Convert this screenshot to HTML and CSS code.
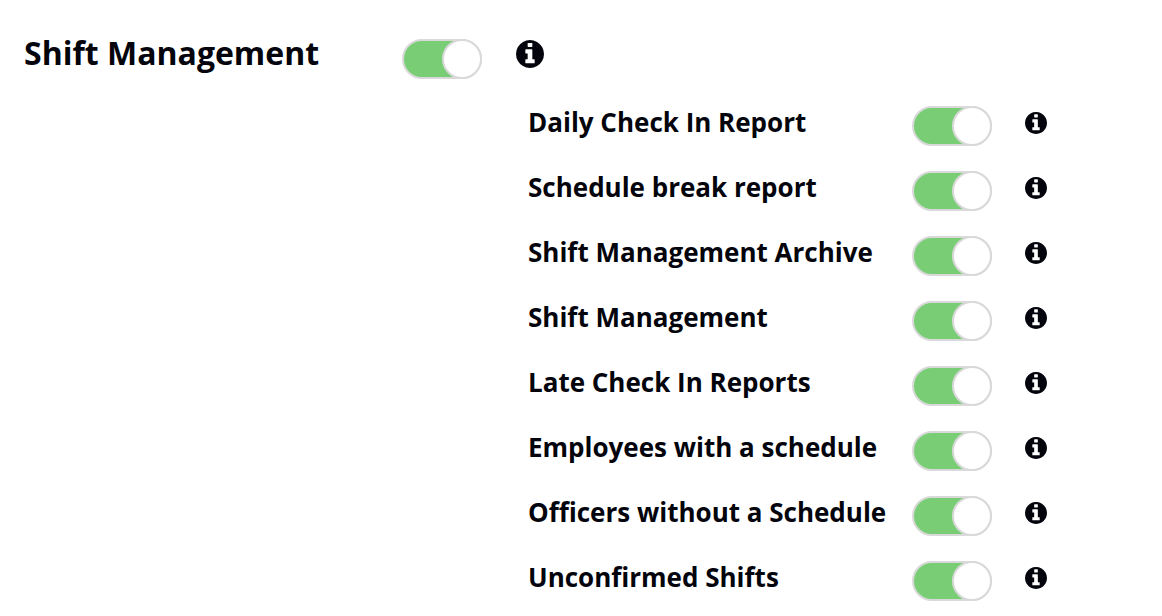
FILE: index.html
```html
<!DOCTYPE html>
<html lang="en">
<head>
    <meta charset="UTF-8">
    <meta name="viewport" content="width=device-width, initial-scale=1.0">
    <title>Shift Management</title>
    <link rel="stylesheet" href="styles.css">
</head>
<body>
    <!-- info icon shared by every row -->
    <svg class="sprite" aria-hidden="true">
        <symbol id="info" viewBox="0 0 1536 1536">
            <path d="M1024 1248v-160q0-14-9-23t-23-9h-96v-512q0-14-9-23t-23-9h-320q-14 0-23 9t-9 23v160q0 14 9 23t23 9h96v320h-96q-14 0-23 9t-9 23v160q0 14 9 23t23 9h448q14 0 23-9t9-23zm-128-896v-160q0-14-9-23t-23-9h-192q-14 0-23 9t-9 23v160q0 14 9 23t23 9h192q14 0 23-9t9-23zm640 416q0 209-103 385.500t-279.500 279.500-385.500 103-385.500-103-279.500-279.500-103-385.500 103-385.500 279.500-279.500 385.500-103 385.500 103 279.500 279.500 103 385.500z"/>
        </symbol>
    </svg>

    <form class="permissions">
        <div class="row main-row">
            <label for="shiftModule">Shift Management</label>
            <input type="checkbox" class="switch" id="shiftModule" checked>
            <button type="button" class="info" aria-label="Info"><svg><use href="#info"/></svg></button>
        </div>
        <div class="sub-list">
            <div class="row">
                <label for="dailyCheckIn">Daily Check In Report</label>
                <input type="checkbox" class="switch" id="dailyCheckIn" checked>
                <button type="button" class="info" aria-label="Info"><svg><use href="#info"/></svg></button>
            </div>
            <div class="row">
                <label for="scheduleBreak">Schedule break report</label>
                <input type="checkbox" class="switch" id="scheduleBreak" checked>
                <button type="button" class="info" aria-label="Info"><svg><use href="#info"/></svg></button>
            </div>
            <div class="row">
                <label for="shiftArchive">Shift Management Archive</label>
                <input type="checkbox" class="switch" id="shiftArchive" checked>
                <button type="button" class="info" aria-label="Info"><svg><use href="#info"/></svg></button>
            </div>
            <div class="row">
                <label for="shiftManagement">Shift Management</label>
                <input type="checkbox" class="switch" id="shiftManagement" checked>
                <button type="button" class="info" aria-label="Info"><svg><use href="#info"/></svg></button>
            </div>
            <div class="row">
                <label for="lateCheckIn">Late Check In Reports</label>
                <input type="checkbox" class="switch" id="lateCheckIn" checked>
                <button type="button" class="info" aria-label="Info"><svg><use href="#info"/></svg></button>
            </div>
            <div class="row">
                <label for="withSchedule">Employees with a schedule</label>
                <input type="checkbox" class="switch" id="withSchedule" checked>
                <button type="button" class="info" aria-label="Info"><svg><use href="#info"/></svg></button>
            </div>
            <div class="row">
                <label for="withoutSchedule">Officers without a Schedule</label>
                <input type="checkbox" class="switch" id="withoutSchedule" checked>
                <button type="button" class="info" aria-label="Info"><svg><use href="#info"/></svg></button>
            </div>
            <div class="row">
                <label for="unconfirmed">Unconfirmed Shifts</label>
                <input type="checkbox" class="switch" id="unconfirmed" checked>
                <button type="button" class="info" aria-label="Info"><svg><use href="#info"/></svg></button>
            </div>
        </div>
    </form>
</body>
</html>
```
FILE: styles.css
```css
body {
    margin: 0;
    background: #fff;
    color: #03040c;
    font-family: "Open Sans", sans-serif;
}
.sprite {
    display: none;
}
.permissions {
    padding: 31px 24px 0;
}
.row {
    display: grid;
    column-gap: 33px;
    align-items: start;
    font-size: 26px;
    line-height: 36px;
    font-weight: bold;
}
.sub-list .row {
    grid-template-columns: 351px 80px 22px;
    padding-bottom: 23px;
}
.sub-list .row:last-child {
    padding-bottom: 0;
}
.main-row {
    grid-template-columns: 344px 80px 28px;
    column-gap: 34px;
    padding-bottom: 25px;
    font-size: 32px;
    line-height: 44px;
}
.sub-list {
    margin-left: 504px;
}
label {
    white-space: nowrap;
}
.switch {
    appearance: none;
    box-sizing: border-box;
    width: 80px;
    height: 40px;
    margin: 2px 0 0;
    border: 2px solid #d9d9d9;
    border-radius: 20px;
    background: #fff;
    cursor: pointer;
}
.switch::before {
    content: "";
    display: block;
    box-sizing: border-box;
    width: 40px;
    height: 40px;
    margin: -2px;
    border: 2px solid #d9d9d9;
    border-radius: 50%;
    background: #fff;
}
.switch:checked {
    background: #79ce75;
}
.switch:checked::before {
    margin-left: auto;
}
.info {
    margin: 8px 0 0;
    padding: 0;
    border: none;
    background: none;
    color: inherit;
    cursor: pointer;
}
.info svg {
    display: block;
    width: 22px;
    height: 22px;
    fill: currentColor;
}
.main-row .switch {
    margin-top: 8px;
}
.main-row .info {
    margin-top: 9px;
}
.main-row .info svg {
    width: 28px;
    height: 28px;
}
```
